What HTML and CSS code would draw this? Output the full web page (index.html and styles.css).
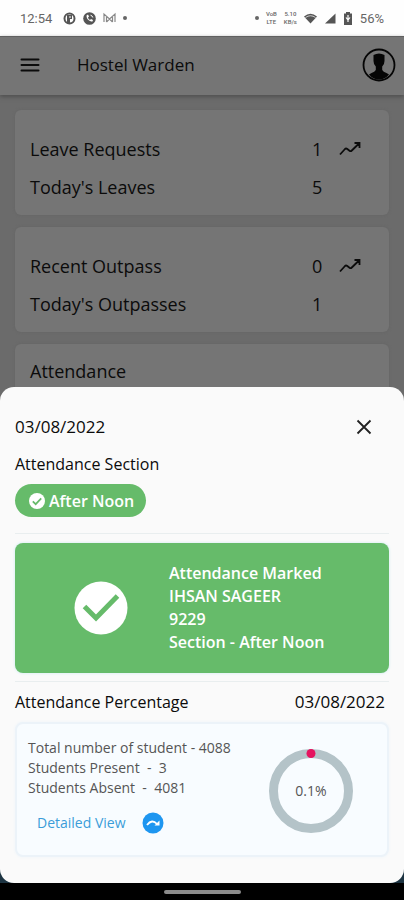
FILE: index.html
```html
<!DOCTYPE html>
<html lang="en">
<head>
<meta charset="utf-8">
<meta name="viewport" content="width=device-width, initial-scale=1">
<title>Hostel Warden</title>
<link rel="stylesheet" href="styles.css">
</head>
<body>
<div class="screen">
  <div class="status">
    <div class="status-group">
      <span class="clock">12:54</span>
      <svg width="13" height="13" viewBox="0 0 13 13"><circle cx="6.500" cy="6.500" r="5" fill="none" stroke="#555" stroke-width="2"/><path d="M4 3h5v4H7v4H4z" fill="#555"/><path d="M6 5h2" stroke="#fff"/></svg>
      <svg width="13" height="13" viewBox="0 0 13 13"><circle cx="6.500" cy="6.500" r="6.300" fill="#555"/><path d="M3.500 3.500c0 3.500 2.500 6 6 6l.5-1.500-2-1-1 1C6 7.500 5.200 6.500 5 5.500l1-1-1-2z" fill="#fff"/><path d="M7.500 3.200a3 3 0 0 1 2.300 2.300" stroke="#fff" fill="none"/></svg>
      <svg width="13" height="10" viewBox="0 0 13 10"><path d="M1 9V1l5.500 5L12 1v8M3.500 9V4M9.500 9V4M3.500 9l3-3 3 3" fill="none" stroke="#888" stroke-width="1.200"/></svg>
      <span class="dot"></span>
    </div>
    <div class="status-group">
      <span class="dot"></span>
      <span class="tiny"><span>VoB</span><span>LTE</span></span>
      <span class="tiny"><span>5.10</span><span>KB/s</span></span>
      <svg width="13" height="11" viewBox="0 0 13 11"><path d="M0 3.500Q6.500-2 13 3.500L6.500 10.500z" fill="#555"/><path d="M1.500 4.500q5-3.500 10 0" fill="none" stroke="#fff" stroke-width=".7"/></svg>
      <svg width="12" height="11" viewBox="0 0 12 11"><path d="M1 10.500L11.500.5v10z" fill="#555"/></svg>
      <svg width="10" height="13" viewBox="0 0 10 13"><path d="M3 0h4v1.500h2V13H1V1.500h2z" fill="#555"/><path d="M5 3v7M3 5.500L5 8l2-2.500" stroke="#fff" fill="none" stroke-width="1.200"/></svg>
      <span class="battery">56%</span>
    </div>
  </div>

  <header class="appbar">
    <button class="icon-btn" type="button" aria-label="Open menu">
      <svg width="20" height="14" viewBox="0 0 20 14"><path d="M1.500 1.500h17M1.500 7h17M1.500 12.500h17" stroke="#0b0b0b" stroke-width="2" stroke-linecap="round"/></svg>
    </button>
    <h1>Hostel Warden</h1>
    <button class="icon-btn" type="button" aria-label="Profile">
      <svg width="34" height="34" viewBox="0 0 34 34"><circle cx="17" cy="17" r="15.500" fill="none" stroke="#050505" stroke-width="1.800"/><path d="M11.500 7Q17 4 22.500 7V13q0 3.500-2.300 5.500V22q1 2 4.300 3l2.500 1.500Q23 31.500 17 31.500T7 26.500L9.500 25q3.300-1 4.300-3v-3.500Q11.500 16.500 11.500 13z" fill="#050505"/></svg>
    </button>
  </header>

  <main class="home">
    <section class="card">
      <div class="stat"><span>Leave Requests</span><b>1</b>
        <svg width="24" height="16" viewBox="0 0 24 16"><path d="M2 13.500L7 8q1-1 2.300 0l2.200 1.800q1.200.8 2.300-.3L21 2.500M16.500 2h5v5" fill="none" stroke="#0b0b0b" stroke-width="1.800"/></svg></div>
      <div class="stat"><span>Today's Leaves</span><b>5</b></div>
    </section>
    <section class="card">
      <div class="stat"><span>Recent Outpass</span><b>0</b>
        <svg width="24" height="16" viewBox="0 0 24 16"><path d="M2 13.500L7 8q1-1 2.300 0l2.200 1.800q1.200.8 2.300-.3L21 2.500M16.500 2h5v5" fill="none" stroke="#0b0b0b" stroke-width="1.800"/></svg></div>
      <div class="stat"><span>Today's Outpasses</span><b>1</b></div>
    </section>
    <section class="card card-short">
      <div class="stat"><span>Attendance</span></div>
    </section>
  </main>

  <div class="overlay">
    <section class="sheet" role="dialog" aria-label="Attendance">
      <div class="sheet-head">
        <span>03/08/2022</span>
        <button class="icon-btn" type="button" aria-label="Close">
          <svg width="16" height="16" viewBox="0 0 16 16"><path d="M1.500 1.500l13 13M14.500 1.500l-13 13" stroke="#222" stroke-width="1.800"/></svg>
        </button>
      </div>
      <h2>Attendance Section</h2>
      <button class="pill" type="button">
        <svg width="16" height="16" viewBox="0 0 16 16"><circle cx="8" cy="8" r="8" fill="#fff"/><path d="M3.800 8.300l2.900 2.900 5.500-5.800" fill="none" stroke="#66bb6a" stroke-width="1.700"/></svg>
        After Noon
      </button>
      <div class="marked">
        <div class="marked-icon"><svg width="54" height="54" viewBox="0 0 54 54"><circle cx="27" cy="27" r="26.500" fill="#fff"/><path d="M10.500 25.500L22 37 43.500 15" fill="none" stroke="#66bb6a" stroke-width="5"/></svg></div>
        <p>Attendance Marked<br>IHSAN SAGEER<br>9229<br>Section - After Noon</p>
      </div>
      <div class="percent-head"><h2>Attendance Percentage</h2><span>03/08/2022</span></div>
      <div class="summary">
        <div class="counts">
          <p>Total number of student - 4088</p>
          <p>Students Present&nbsp; -&nbsp; 3</p>
          <p>Students Absent&nbsp; -&nbsp; 4081</p>
          <a class="detail" href="#detail">Detailed View
            <svg width="22" height="22" viewBox="0 0 22 22"><circle cx="11" cy="11" r="10.500" fill="#1e96f0"/><path d="M5 13q5-6.500 10-1" fill="none" stroke="#fff" stroke-width="1.800"/><path d="M17.500 8.500V13.500h-5z" fill="#fff"/></svg>
          </a>
        </div>
        <div class="gauge">
          <svg width="84" height="84" viewBox="0 0 84 84"><circle cx="42" cy="42" r="37.500" fill="none" stroke="#b4c3c8" stroke-width="9"/><circle cx="42" cy="4.500" r="4.500" fill="#e5135f"/></svg>
          <span>0.1%</span>
        </div>
      </div>
    </section>
    <div class="navbar"><span></span></div>
  </div>
</div>
</body>
</html>
```
FILE: styles.css
```css
* { box-sizing: border-box; }
body {
  margin: 0;
  background: #6b6b6b;
  color: #0b0b0b;
  font-family: "Open Sans", "Noto Sans", sans-serif;
  font-size: 16px;
}
h1, h2, p { margin: 0; font-weight: inherit; }
svg { display: block; flex: none; overflow: visible; }
button { font: inherit; border: 0; cursor: pointer; }
.icon-btn { background: none; padding: 0; color: inherit; }

.screen {
  position: relative;
  height: 100vh;
  overflow: hidden;
  display: flex;
  flex-direction: column;
}

.status {
  flex: none;
  height: 36px;
  padding: 0 20px;
  display: flex;
  align-items: center;
  justify-content: space-between;
  background: #fefefe;
  color: #666;
}
.status-group { display: flex; align-items: center; gap: 7px; }
.clock, .battery { font-size: 13px; font-family: Roboto, sans-serif; }
.clock { margin-right: 4px; }
.dot { width: 4px; height: 4px; border-radius: 50%; background: #666; }
.tiny { display: grid; font: 500 6px/8px Roboto, sans-serif; text-align: center; }

.appbar {
  flex: none;
  height: 59px;
  padding: 0 8px 3px 20px;
  display: flex;
  align-items: center;
  background: #757575;
  border-top: 1px solid #606060;
  box-shadow: 0 2px 4px #505050;
}
.appbar h1 { flex: 1; margin-left: 37px; font-size: 17px; }

.home {
  display: flex;
  flex-direction: column;
  gap: 12px;
  padding: 15px 15px 0;
}
.card {
  padding: 20px 27px 9px 15px;
  border-radius: 6px;
  background: #757575;
  box-shadow: 0 0 3px #656565;
}
.card-short { padding-top: 8px; }
.stat {
  display: grid;
  grid-template-columns: 1fr 26px 24px;
  align-items: center;
  height: 38px;
  font-size: 18px;
}
.stat b { font-weight: 400; }

.overlay {
  position: absolute;
  left: 0;
  right: 0;
  bottom: 0;
  background: linear-gradient(#6b6b6b 50%, #1d3442 50%);
}
.sheet {
  padding: 24px 15px 26px;
  border-radius: 14px;
  background: #fafafa;
  font-size: 16px;
}
.sheet-head {
  display: flex;
  align-items: center;
  justify-content: space-between;
  height: 32px;
  padding-right: 17px;
}
.sheet-head span, .percent-head span { font-size: 17px; line-height: 24px; }
.sheet h2 { font-size: 16px; line-height: 24px; }
.sheet-head + h2 { margin-top: 9px; }
.pill {
  display: flex;
  align-items: center;
  gap: 4px;
  height: 33px;
  margin: 8px 0 16px;
  padding: 0 12px 0 14px;
  border-radius: 17px;
  background: #66bb6a;
  color: #fff;
  font-weight: 600;
}
.marked {
  position: relative;
  display: grid;
  grid-template-columns: 154px 1fr;
  align-items: center;
  height: 130px;
  margin: 26px 0 9px;
  border-radius: 8px;
  background: #66bb6a;
  box-shadow: 0 0 3px #c8eaf0;
  color: #fff;
  font-weight: 600;
  line-height: 23px;
}
.marked::before, .marked::after {
  content: "";
  position: absolute;
  left: 0;
  right: 0;
  height: 1px;
  background: #e9eeef;
}
.marked::before { top: -10px; }
.marked::after { bottom: -9px; }
.marked-icon { padding-left: 59px; }
.percent-head {
  display: flex;
  align-items: center;
  justify-content: space-between;
  height: 40px;
  padding-right: 4px;
}
.summary {
  display: flex;
  justify-content: space-between;
  height: 135px;
  padding: 14px 34px 0 11px;
  border: 2px solid #ecf3f9;
  border-radius: 8px;
  background: #f8fcff;
  box-shadow: 0 0 3px #edf4fa;
  color: #555;
  font-size: 14px;
  line-height: 20px;
}
.detail {
  display: flex;
  align-items: center;
  gap: 16px;
  margin: 14px 0 0 9px;
  color: #3b9cd9;
  text-decoration: none;
}
.gauge {
  display: grid;
  place-items: center;
  width: 84px;
  height: 84px;
  margin-top: 11px;
}
.gauge > * { grid-area: 1 / 1; }
.navbar {
  display: flex;
  justify-content: center;
  align-items: center;
  height: 17px;
  background: #000;
}
.navbar span { width: 77px; height: 4px; border-radius: 2px; background: #8c8c8c; }
```
